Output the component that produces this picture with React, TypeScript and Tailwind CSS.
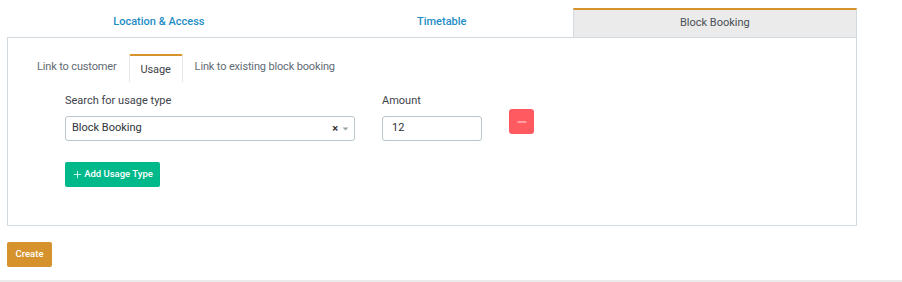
import { Plus, Minus } from "lucide-react";

const topTabs = [
  { label: "Location & Access", active: false },
  { label: "Timetable", active: false },
  { label: "Block Booking", active: true },
];

export default function App() {
  return (
    <div className="w-[902px] h-[282px] bg-white font-['Roboto',sans-serif] flex flex-col">
      <div className="pl-[7px] pt-2 w-[857px]">
        <div className="flex h-[29px]">
          {topTabs.map((t) =>
            t.active ? (
              <div
                key={t.label}
                className="flex-auto flex items-center justify-center px-3 bg-[#ebebeb] border-t-2 border-x border-t-[#d6922c] border-x-[#d3dbe0] text-[11px] text-[#4a4f55]"
              >
                {t.label}
              </div>
            ) : (
              <div
                key={t.label}
                className="flex-auto flex items-center justify-center px-3 pb-[1px] text-[11px] font-medium text-[#1f8dc6]"
              >
                {t.label}
              </div>
            )
          )}
        </div>

        <div className="h-[189px] border border-[#d3dbe0] pt-4 pl-[17px]">
          <div className="flex h-[28px] text-[11px] tracking-[-0.15px] text-[#5f6b73]">
            <div className="px-3 flex items-center pb-[1px]">Link to customer</div>
            <div className="px-[11px] flex items-center pt-[3px] border-t-2 border-x border-t-[#d6922c] border-x-[#e2e6e9] rounded-t-[2px] text-[#3d4247]">
              Usage
            </div>
            <div className="px-3 flex items-center pb-[1px]">Link to existing block booking</div>
          </div>

          <div className="pl-[40px] pt-[12px]">
            <div className="flex items-start">
              <div className="w-[290px]">
                <div className="text-[11px] text-[#3e4348] h-[14px] leading-[14px]">Search for usage type</div>
                <div className="mt-[8px] h-[25px] border border-[#b9c6cc] rounded-[3px] flex items-center pl-[6px] pr-[4px] text-[11px] text-[#2e3338]">
                  <span className="flex-1">Block Booking</span>
                  <span className="text-[11px] font-bold text-[#333] leading-none">×</span>
                  <svg width="9" height="6" viewBox="0 0 9 6" className="ml-[3px]">
                    <path d="M1.5 1.5h6L4.5 4.5z" fill="#9aa3a8" />
                  </svg>
                </div>
              </div>
              <div className="w-[100px] ml-[27px]">
                <div className="text-[11px] text-[#3e4348] h-[14px] leading-[14px]">Amount</div>
                <div className="mt-[8px] h-[25px] border border-[#b9c6cc] rounded-[3px] flex items-center pl-[9px] text-[11px] text-[#2e3338]">
                  12
                </div>
              </div>
              <button className="ml-[27px] mt-[15px] w-[25px] h-[25px] rounded-[3px] bg-[#ff5a5f] flex items-center justify-center text-white">
                <Minus size={14} strokeWidth={1.4} />
              </button>
            </div>

            <button className="mt-[21px] h-[25px] w-[95px] rounded-[2px] bg-[#00b98b] text-white text-[9.5px] font-medium flex items-center justify-center gap-[1px]">
              <Plus size={11} strokeWidth={1.75} />
              Add Usage Type
            </button>
          </div>
        </div>

        <button className="mt-4 h-[25px] w-[45px] rounded-[2px] bg-[#d6922c] text-white text-[9.5px] font-medium">
          Create
        </button>
      </div>
      <div className="mt-auto h-[2px] bg-[#ebebeb]" />
    </div>
  );
}
